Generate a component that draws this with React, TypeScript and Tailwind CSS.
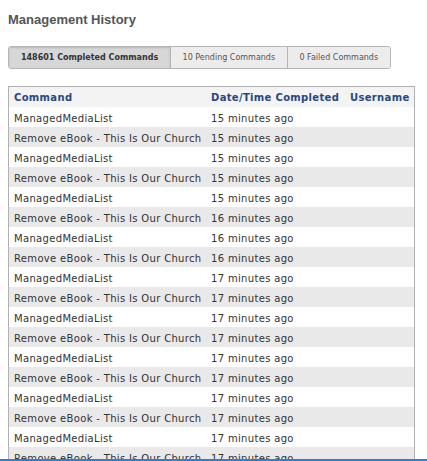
const rows = [
  { command: "ManagedMediaList", when: "15 minutes ago" },
  { command: "Remove eBook - This Is Our Church", when: "15 minutes ago" },
  { command: "ManagedMediaList", when: "15 minutes ago" },
  { command: "Remove eBook - This Is Our Church", when: "15 minutes ago" },
  { command: "ManagedMediaList", when: "15 minutes ago" },
  { command: "Remove eBook - This Is Our Church", when: "16 minutes ago" },
  { command: "ManagedMediaList", when: "16 minutes ago" },
  { command: "Remove eBook - This Is Our Church", when: "16 minutes ago" },
  { command: "ManagedMediaList", when: "17 minutes ago" },
  { command: "Remove eBook - This Is Our Church", when: "17 minutes ago" },
  { command: "ManagedMediaList", when: "17 minutes ago" },
  { command: "Remove eBook - This Is Our Church", when: "17 minutes ago" },
  { command: "ManagedMediaList", when: "17 minutes ago" },
  { command: "Remove eBook - This Is Our Church", when: "17 minutes ago" },
  { command: "ManagedMediaList", when: "17 minutes ago" },
  { command: "Remove eBook - This Is Our Church", when: "17 minutes ago" },
  { command: "ManagedMediaList", when: "17 minutes ago" },
  { command: "Remove eBook - This Is Our Church", when: "17 minutes ago" },
]

const tabs = [
  { label: "148601 Completed Commands", active: true, w: "w-[162px]" },
  { label: "10 Pending Commands", active: false, w: "w-[117px]" },
  { label: "0 Failed Commands", active: false, w: "w-[104px]" },
]

export default function App() {
  return (
    <div className="flex h-[461px] w-[427px] flex-col overflow-hidden bg-white">
      <div className="flex-1 overflow-hidden px-2">
        {/* title */}
        <h1 className="pt-[12px] font-['Liberation_Sans',Arial,sans-serif] text-[13px] font-bold leading-[16px] text-[#555555]">
          Management History
        </h1>

        {/* tabs */}
        <div className="mt-[18px] flex h-[23px] w-[383px] overflow-hidden rounded-[3px] border border-[#b5b5b5] font-['DejaVu_Sans',Verdana,sans-serif] text-[8px]">
          {tabs.map((tab, i) => (
            <div
              key={tab.label}
              className={`flex items-center justify-center ${tab.w} ${i > 0 ? "border-l border-[#b5b5b5]" : ""} ${
                tab.active
                  ? "bg-[#d7d7d7] font-bold text-[#333333] shadow-[inset_0_1px_2px_rgba(0,0,0,0.15)]"
                  : "bg-[#ececec] text-[#555555]"
              }`}
            >
              {tab.label}
            </div>
          ))}
        </div>

        {/* table */}
        <div className="mt-[17px] w-[407px] border border-[#b0b0b0] font-['DejaVu_Sans',Verdana,sans-serif] text-[10px] leading-5 tracking-[0.33px]">
          <div className="flex h-5 items-center bg-[#f3f3f3] pt-[2px] font-bold text-[#27497f]">
            <div className="w-[202px] pl-[5px]">Command</div>
            <div className="w-[139px]">Date/Time Completed</div>
            <div className="flex-1">Username</div>
          </div>
          {rows.map((row, i) => (
            <div
              key={i}
              className={`flex h-5 items-center pt-[3px] text-[#333333] ${i % 2 === 1 ? "bg-[#e9e9e9]" : "bg-white"}`}
            >
              <div className="w-[202px] whitespace-nowrap pl-[5px]">{row.command}</div>
              <div className="w-[139px] whitespace-nowrap">{row.when}</div>
              <div className="flex-1" />
            </div>
          ))}
        </div>
      </div>
      <div className="h-[2px] bg-[#2b80d3]" />
    </div>
  )
}
